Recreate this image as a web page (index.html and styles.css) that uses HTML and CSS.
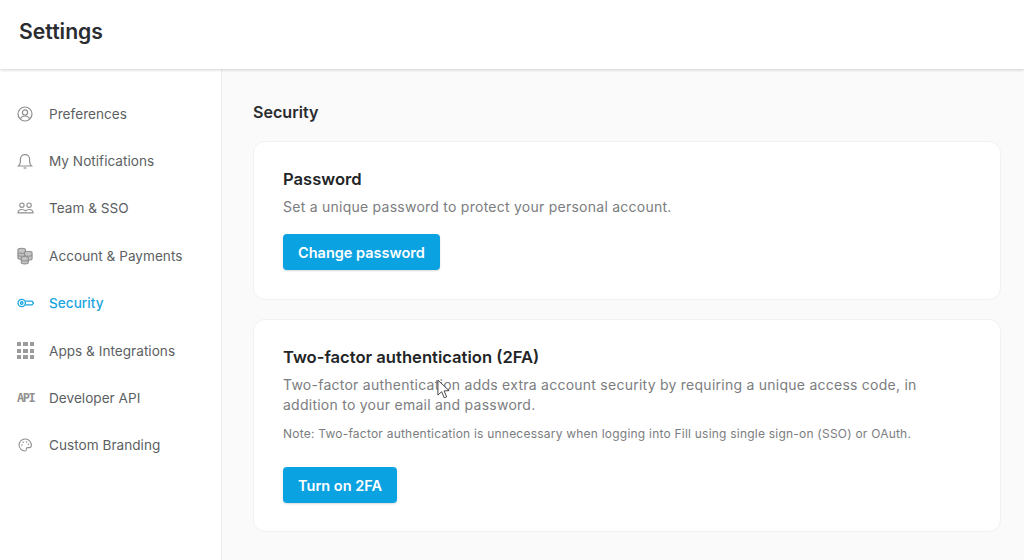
FILE: index.html
```html
<!DOCTYPE html>
<html lang="en">
<head>
    <meta charset="UTF-8">
    <meta name="viewport" content="width=device-width, initial-scale=1.0">
    <title>Settings</title>
    <link rel="stylesheet" href="styles.css">
</head>
<body>
    <header class="top-bar">
        <h1>Settings</h1>
    </header>

    <div class="layout">
        <nav class="sidebar">
            <a class="nav-item" href="#">
                <svg class="nav-icon" viewBox="0 0 16 16">
                    <circle cx="8" cy="8" r="7"/>
                    <circle cx="8" cy="6.4" r="2.6"/>
                    <path d="M3.4 12.800c1-1.900 2.600-2.800 4.600-2.800s3.600.9 4.600 2.800"/>
                </svg>
                Preferences
            </a>
            <a class="nav-item" href="#">
                <svg class="nav-icon" viewBox="0 0 16 16">
                    <path d="M1.500 13h13c-1.300-1.200-1.900-2.400-1.900-4.600V6.200C12.600 3.500 10.600 1.600 8 1.600S3.400 3.500 3.400 6.200v2.200c0 2.200-.6 3.400-1.900 4.600z"/>
                    <path d="M6.600 15h2.800"/>
                </svg>
                My Notifications
            </a>
            <a class="nav-item" href="#">
                <svg class="nav-icon nav-icon-wide" viewBox="0 0 18 14">
                    <circle cx="5.200" cy="4" r="2.300"/>
                    <circle cx="12.800" cy="4" r="2.300"/>
                    <path d="M1 12.200c0-2.400 1.600-3.600 4.200-3.600 1.600 0 2.900.5 3.800 1.500.9-1 2.200-1.500 3.800-1.500 2.600 0 4.200 1.200 4.200 3.600z"/>
                </svg>
                Team &amp; SSO
            </a>
            <a class="nav-item" href="#">
                <svg class="nav-icon nav-icon-tall" viewBox="0 0 17 18">
                    <path class="coin" d="M1 2.500C1 1.300 3 .8 5 .8s4 .5 4 1.700v8.500c0 1-2 1.500-4 1.500s-4-.5-4-1.500z"/>
                    <path d="M1 5.500c1.500 1 6.500 1 8 0M1 8.500c1.500 1 6.500 1 8 0"/>
                    <path class="coin" d="M8 5.500c0-1 1.800-1.500 4-1.500s4 .5 4 1.500v6.500c0 1-1.800 1.500-4 1.500s-4-.5-4-1.500z"/>
                    <path d="M8 8.500c1.500 1 6.500 1 8 0"/>
                    <path class="coin" d="M4.500 11c0-1 1.800-1.500 3.800-1.500s3.700.5 3.700 1.500v4.800c0 1-1.700 1.500-3.700 1.500s-3.800-.5-3.800-1.500z"/>
                    <path d="M4.500 13.500c1.500 1 6 1 7.500 0"/>
                </svg>
                Account &amp; Payments
            </a>
            <a class="nav-item active" href="#">
                <svg class="nav-icon nav-icon-wide" viewBox="0 0 18 12">
                    <circle cx="5" cy="6" r="3.900"/>
                    <circle cx="5" cy="6" r="1.300"/>
                    <path d="M8.900 4h7l1.600 2-1.600 2h-7"/>
                </svg>
                Security
            </a>
            <a class="nav-item" href="#">
                <span class="app-grid">
                    <i></i><i></i><i></i><i></i><i></i><i></i><i></i><i></i><i></i>
                </span>
                Apps &amp; Integrations
            </a>
            <a class="nav-item" href="#">
                <span class="api-mark">API</span>
                Developer API
            </a>
            <a class="nav-item" href="#">
                <svg class="nav-icon nav-icon-small" viewBox="0 0 16 16">
                    <path d="M8 1.200C4 1.200 1.200 4.200 1.200 8s3 6.800 6.600 6.800c1.300 0 1.900-.8 1.700-1.800-.2-1.100.4-2 1.600-2h2c1.300 0 2.200-1 2.200-2.600 0-4-3.200-7.200-6.600-7.200z"/>
                    <circle class="solid" cx="4.600" cy="8" r=".9"/>
                    <circle class="solid" cx="6" cy="4.800" r=".9"/>
                    <circle class="solid" cx="9.800" cy="4.600" r=".9"/>
                    <circle class="solid" cx="12" cy="7.200" r=".9"/>
                </svg>
                Custom Branding
            </a>
        </nav>

        <main class="content">
            <h2>Security</h2>

            <section class="card card-password">
                <h3>Password</h3>
                <p>Set a unique password to protect your personal account.</p>
                <button class="btn" type="button">Change password</button>
            </section>

            <section class="card card-2fa">
                <h3>Two-factor authentication (2FA)</h3>
                <p>Two-factor authentication adds extra account security by requiring a unique access code, in addition to your email and password.</p>
                <p class="note">Note: Two-factor authentication is unnecessary when logging into Fill using single sign-on (SSO) or OAuth.</p>
                <button class="btn" type="button">Turn on 2FA</button>
            </section>
        </main>
    </div>

    <svg class="cursor" viewBox="0 0 14 22">
        <path d="M1 1v16l4-3.600 2.800 6.600 2.600-1.100-2.800-6.400 5.400-.3z"/>
    </svg>
</body>
</html>
```

FILE: styles.css
```css
* {
    margin: 0;
    padding: 0;
    box-sizing: border-box;
}

body {
    font-family: Inter, "Open Sans", sans-serif;
    background: #fafafa;
    color: #1d1d1f;
    width: 1024px;
    height: 560px;
    overflow: hidden;
    position: relative;
}

.top-bar {
    background: white;
    height: 69px;
    padding: 0 19px;
    display: flex;
    align-items: center;
    position: relative;
    z-index: 1;
    box-shadow: 0 1px 3px rgba(0, 0, 0, 0.18);
}

.top-bar h1 {
    font-size: 21.2px;
    font-weight: 600;
    color: #2a2c2f;
    padding-bottom: 8px;
}

.layout {
    display: flex;
    height: 491px;
}

.sidebar {
    width: 222px;
    background: white;
    border-right: 1px solid #eeeeee;
    padding-top: 21px;
    display: flex;
    flex-direction: column;
}

.nav-item {
    height: 47.4px;
    padding-left: 17px;
    display: flex;
    align-items: center;
    font-size: 13.6px;
    letter-spacing: 0.02px;
    color: #5c5f63;
    text-decoration: none;
}

.nav-item.active {
    color: #1ba6de;
    font-weight: 500;
}

.nav-icon {
    width: 16px;
    height: 16px;
    margin-right: 16px;
    fill: none;
    stroke: #8f8f8f;
    stroke-width: 1.2;
    flex-shrink: 0;
}

.nav-icon .solid {
    fill: #8f8f8f;
    stroke: none;
}

.nav-icon .coin {
    fill: #c4c4c4;
}

.nav-icon-wide {
    width: 17px;
    margin-right: 15px;
}

.nav-icon-tall {
    height: 18px;
}

.nav-icon-small {
    width: 14px;
    height: 14px;
    margin-left: 1px;
    margin-right: 17px;
}

.active .nav-icon {
    stroke: #1ba6de;
    stroke-width: 1.4;
}

.app-grid {
    width: 17px;
    margin-right: 15px;
    display: grid;
    grid-template-columns: repeat(3, 4.2px);
    gap: 2.2px;
}

.app-grid i {
    height: 4.2px;
    background: #9b9b9b;
}

.api-mark {
    width: 17px;
    margin-right: 15px;
    font-family: "DejaVu Sans Mono", monospace;
    font-size: 12px;
    font-weight: 700;
    letter-spacing: -1.5px;
    color: #929292;
    white-space: nowrap;
}

.content {
    flex: 1;
    padding: 33px 23px 0 31px;
}

.content h2 {
    font-size: 16.1px;
    font-weight: 600;
    color: #2a2c2f;
    line-height: 20px;
    margin-bottom: 19px;
}

.card {
    background: white;
    border: 1px solid #f1f1f1;
    border-radius: 12px;
    padding: 28px 29px 0;
}

.card-password {
    height: 159px;
    margin-bottom: 19px;
}

.card-2fa {
    height: 213px;
}

.card h3 {
    font-size: 16.6px;
    font-weight: 600;
    color: #222426;
    line-height: 18px;
    margin-bottom: 9px;
}

.card p {
    font-size: 14px;
    letter-spacing: 0.25px;
    line-height: 20px;
    max-width: 650px;
    color: #7b7d80;
}

.card .note {
    font-size: 12px;
    letter-spacing: 0.22px;
    line-height: 16px;
    max-width: none;
    margin-top: 11px;
    margin-bottom: 25px;
}

.btn {
    display: block;
    height: 36px;
    padding: 0 15px;
    margin-top: 17px;
    background: #0ba2e2;
    color: white;
    border: none;
    border-radius: 4px;
    font-family: inherit;
    font-size: 14.5px;
    line-height: 35px;
    font-weight: 600;
    box-shadow: 0 1px 2px rgba(0, 0, 0, 0.15);
}

.note + .btn {
    margin-top: 0;
}

.cursor {
    position: absolute;
    left: 437px;
    top: 379px;
    width: 13px;
    height: 21px;
    fill: white;
    stroke: #3a3a3a;
    stroke-width: 1;
}
```
